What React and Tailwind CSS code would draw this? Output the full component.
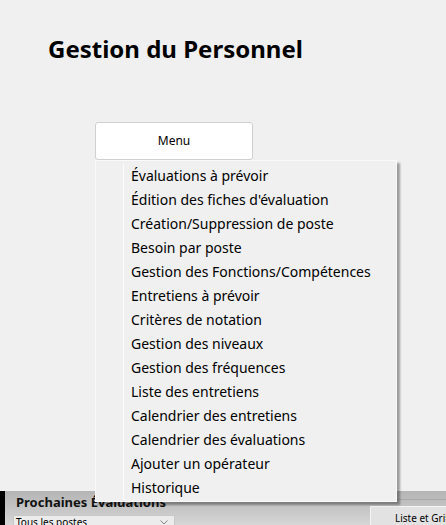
import React from 'react';

const items = [
  'Évaluations à prévoir',
  "Édition des fiches d'évaluation",
  'Création/Suppression de poste',
  'Besoin par poste',
  'Gestion des Fonctions/Compétences',
  'Entretiens à prévoir',
  'Critères de notation',
  'Gestion des niveaux',
  'Gestion des fréquences',
  'Liste des entretiens',
  'Calendrier des entretiens',
  'Calendrier des évaluations',
  'Ajouter un opérateur',
  'Historique',
];

function App() {
  return (
    <div className="relative h-[525px] w-[446px] overflow-hidden bg-[#f0f0f0] flex flex-col font-['Noto_Sans',sans-serif] text-black">
      <h1 className="pl-[48px] pt-[34px] text-[24px] font-bold leading-[30px]">Gestion du Personnel</h1>

      <div className="pl-[95px] pt-[58px]">
        <button className="w-[158px] h-[38px] bg-white border border-[#d0d0d0] rounded-[3px] text-[12px]">
          Menu
        </button>
      </div>

      <div className="flex-1" />

      {/* bottom panel, partly hidden behind the menu */}
      <div className="h-[34px] flex">
        <div className="w-[5px] shrink-0 bg-black" />
        <div className="flex-1 flex bg-gradient-to-b from-[#b4b4b4] to-[#d6d6d6]">
          <div className="w-[365px] shrink-0 flex flex-col pl-[11px] pt-[2px]">
            <div className="text-[13px] font-bold leading-[18px] text-[#111]">Prochaines Évaluations</div>
            <div className="mt-[4px] w-[162px] h-[14px] ml-[-3px] bg-[#ececec] border border-[#c8c8c8] flex items-center justify-between px-[2px]">
              <span className="text-[10px] leading-[12px]">Tous les postes</span>
              <svg width="8" height="5" viewBox="0 0 8 5" className="mr-[4px]">
                <path d="M0.5 0.5 L4 4 L7.5 0.5" fill="none" stroke="#888" strokeWidth="1" />
              </svg>
            </div>
          </div>
          <div className="flex-1 min-w-0 flex flex-col">
            <div className="h-[9px] border-b border-[#a8a8a8]" />
            <div className="mt-[6px] h-[20px] bg-[#e2e2e2] border-l border-t border-[#f4f4f4] pl-[24px] text-[10px] leading-[22px] whitespace-nowrap overflow-hidden">
              Liste et Grilles
            </div>
          </div>
        </div>
      </div>

      {/* dropdown menu overlay */}
      <div className="absolute left-[95px] top-[160px] w-[302px] bg-[#f0f0f0] border border-[#fafafa] shadow-[3px_3px_2px_rgba(0,0,0,0.35)] flex pt-[3px] pb-[1px]">
        <div className="w-[28px] border-r border-[#fcfcfc]" />
        <ul className="flex-1">
          {items.map((item) => (
            <li key={item} className="h-[24px] pl-[7px] text-[14px] leading-[24px] whitespace-nowrap">
              {item}
            </li>
          ))}
        </ul>
      </div>
    </div>
  );
}

export default App;
